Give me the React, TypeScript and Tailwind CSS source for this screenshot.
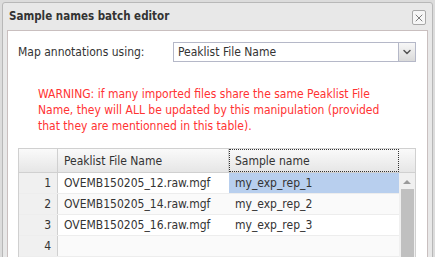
import { ChevronDown, X } from "lucide-react";

const rows = [
  { n: 1, file: "OVEMB150205_12.raw.mgf", sample: "my_exp_rep_1" },
  { n: 2, file: "OVEMB150205_14.raw.mgf", sample: "my_exp_rep_2" },
  { n: 3, file: "OVEMB150205_16.raw.mgf", sample: "my_exp_rep_3" },
  { n: 4, file: "", sample: "" },
];

export default function App() {
  return (
    <div className="w-[435px] h-[257px] overflow-hidden bg-[#dcdcdc] font-['DejaVu_Sans_Condensed','DejaVu_Sans',sans-serif] text-[12px] text-[#333]">
      <div className="ml-[2px] mt-[2px] w-[431px] h-[300px] bg-[#e8e8e8] border border-[#b8b8b8] rounded-t-[3px]">
        {/* title bar */}
        <div className="h-[27px] flex items-center justify-between pl-[6px] pr-[6px]">
          <span className="font-bold text-[11.5px] text-[#333]">Sample names batch editor</span>
          <span className="w-[14px] h-[15px] mt-[2px] flex items-center justify-center border border-[#a8a8a8] rounded-[2px] bg-[#f6f6f6]">
            <X size={12} strokeWidth={1.5} className="text-[#555]" />
          </span>
        </div>

        {/* body */}
        <div className="ml-[4px] w-[421px] h-[260px] bg-white border border-[#c9bfbf]">
          <div className="flex items-center pl-[10px] pt-[11px]">
            <span className="w-[155px]">Map annotations using:</span>
            <div className="w-[243px] h-[20px] flex border border-[#b5b8c8]">
              <span className="flex-1 pl-[4px] leading-[18px]">Peaklist File Name</span>
              <span className="w-[17px] h-full flex items-center justify-center bg-gradient-to-b from-[#f7f7f7] to-[#dadada] border-l border-[#b5b8c8]">
                <ChevronDown size={12} strokeWidth={3} className="text-[#555]" />
              </span>
            </div>
          </div>

          <p className="pl-[30px] mt-[24px] leading-[16px] text-[#ff3333]">
            WARNING: if many imported files share the same Peaklist File
            <br />
            Name, they will ALL be updated by this manipulation (provided
            <br />
            that they are mentionned in this table).
          </p>

          {/* grid */}
          <div className="ml-[10px] mt-[14px] w-[398px] border border-[#d0d0d0]">
            <div className="flex h-[24px] bg-gradient-to-b from-[#fafafa] to-[#e6e6e6] border-b border-[#d0d0d0]">
              <div className="w-[39px] border-r border-[#d0d0d0]" />
              <div className="w-[171px] pl-[6px] flex items-center border-r border-[#d0d0d0]">
                Peaklist File Name
              </div>
              <div className="w-[170px] pl-[5px] flex items-center border border-dotted border-[#333]">
                Sample name
              </div>
              <div className="flex-1" />
            </div>
            <div className="flex">
              <div className="w-[380px]">
                {rows.map((r) => (
                  <div
                    key={r.n}
                    className={`flex h-[21px] border-b ${r.n % 2 === 0 ? "bg-[#fafafa]" : "bg-white"} border-[#ededed]`}
                  >
                    <div className="w-[39px] bg-[#f0f0f0] border-r border-[#d0d0d0] text-right pr-[6px] leading-[20px]">
                      {r.n}
                    </div>
                    <div className="w-[171px] pl-[6px] leading-[20px]">{r.file}</div>
                    <div
                      className={`w-[170px] pl-[6px] leading-[20px] ${r.n === 1 ? "bg-[#b8cfee]" : ""}`}
                    >
                      {r.sample}
                    </div>
                  </div>
                ))}
              </div>
              <div className="flex-1 bg-[#f0f0f0] flex flex-col items-center pt-[7px]">
                <span className="w-0 h-0 border-x-[4px] border-x-transparent border-b-[4px] border-b-[#9a9a9a]" />
                <span className="mt-[5px] w-[13px] h-[70px] bg-[#c0c0c0]" />
              </div>
            </div>
          </div>
        </div>
      </div>
    </div>
  );
}
